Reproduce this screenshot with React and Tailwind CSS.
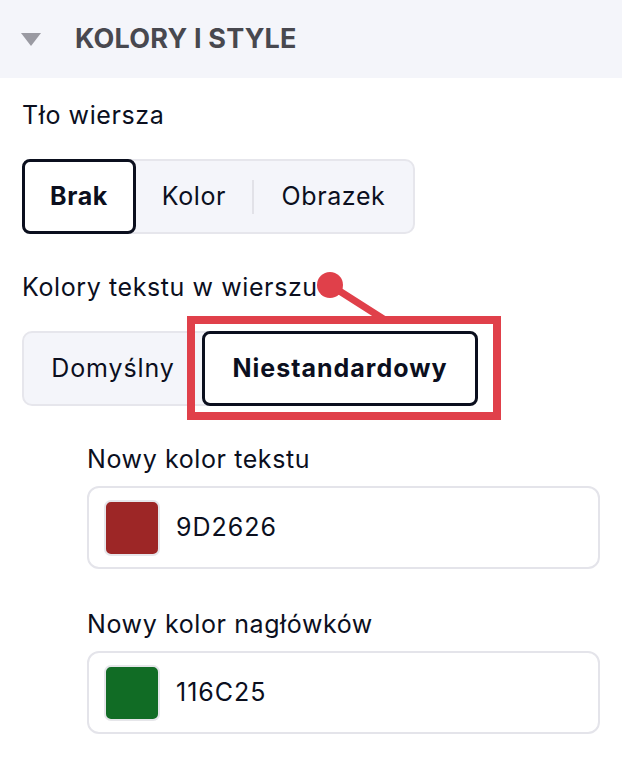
import React from 'react';

const font = { fontFamily: 'Inter, "Noto Sans", sans-serif' };

const ColorField = ({ label, color, value }) => (
  <div className="flex flex-col">
    <div className="text-[25px] leading-[30px] tracking-[0.6px] text-[#0b0f1e]">{label}</div>
    <div className="mt-[12px] flex h-[83px] w-[513px] items-center rounded-[12px] border-2 border-[#e4e4ea] bg-white pl-[15px]">
      <div className={`h-[56px] w-[56px] rounded-[7px] border-2 border-[#e6e6ea] ${color}`} />
      <span className="ml-[16px] text-[25px] tracking-[1px] text-[#0b0f1e]">{value}</span>
    </div>
  </div>
);

export default function App() {
  return (
    <div className="relative h-[778px] w-[622px] overflow-hidden bg-white" style={font}>
      {/* Section header */}
      <div className="flex h-[78px] items-center bg-[#f4f5fa] pl-[21px]">
        <svg width="20" height="13" viewBox="0 0 20 13" className="mt-[1px]">
          <path d="M0 0 H20 L10 13 Z" fill="#9a9aa2" />
        </svg>
        <span className="ml-[34px] text-[27px] font-bold tracking-[0.2px] text-[#48484f]">
          KOLORY I STYLE
        </span>
      </div>

      <div className="flex flex-col pl-[22px] pt-[22px]">
        <div className="text-[25px] leading-[30px] tracking-[0.6px] text-[#0b0f1e]">Tło wiersza</div>

        {/* Row background segmented control */}
        <div className="mt-[29px] flex h-[75px] w-[393px] items-center rounded-[10px] border-2 border-[#e6e6ec] bg-[#f4f5fa]">
          <div className="-ml-[2px] flex h-[75px] w-[114px] items-center justify-center rounded-[8px] border-[3px] border-[#0b0f1e] bg-white text-[25px] font-bold tracking-[0.6px] text-[#0b0f1e]">
            Brak
          </div>
          <div className="flex w-[116px] justify-center text-[25px] tracking-[0.6px] text-[#0b0f1e]">Kolor</div>
          <div className="h-[34px] w-[2px] bg-[#e2e2e8]" />
          <div className="flex flex-1 justify-center text-[25px] tracking-[0.6px] text-[#0b0f1e]">Obrazek</div>
        </div>

        <div className="mt-[38px] text-[25px] leading-[30px] tracking-[0.6px] text-[#0b0f1e]">
          Kolory tekstu w wierszu
        </div>

        {/* Text color segmented control */}
        <div className="mt-[29px] flex h-[75px] w-[456px] items-center rounded-[10px] border-2 border-[#e6e6ec] bg-[#f4f5fa]">
          <div className="flex w-[178px] justify-center text-[25px] tracking-[0.9px] text-[#0b0f1e]">Domyślny</div>
          <div className="-mr-[2px] flex h-[75px] flex-1 items-center justify-center rounded-[8px] border-[3px] border-[#0b0f1e] bg-white text-[25px] font-bold tracking-[1px] text-[#0b0f1e]">
            Niestandardowy
          </div>
        </div>

        <div className="mt-[38px] flex flex-col gap-[40px] pl-[65px]">
          <ColorField label="Nowy kolor tekstu" color="bg-[#9d2626]" value="9D2626" />
          <ColorField label="Nowy kolor nagłówków" color="bg-[#116c25]" value="116C25" />
        </div>
      </div>

      {/* Annotation */}
      <div className="absolute left-[187px] top-[316px] h-[104px] w-[314px] border-[8px] border-[#e0404a]" />
      <svg className="absolute left-0 top-0" width="622" height="778">
        <line x1="330" y1="285" x2="385" y2="320" stroke="#e0404a" strokeWidth="7" strokeLinecap="round" />
        <circle cx="330" cy="285" r="13" fill="#e0404a" />
      </svg>
    </div>
  );
}
